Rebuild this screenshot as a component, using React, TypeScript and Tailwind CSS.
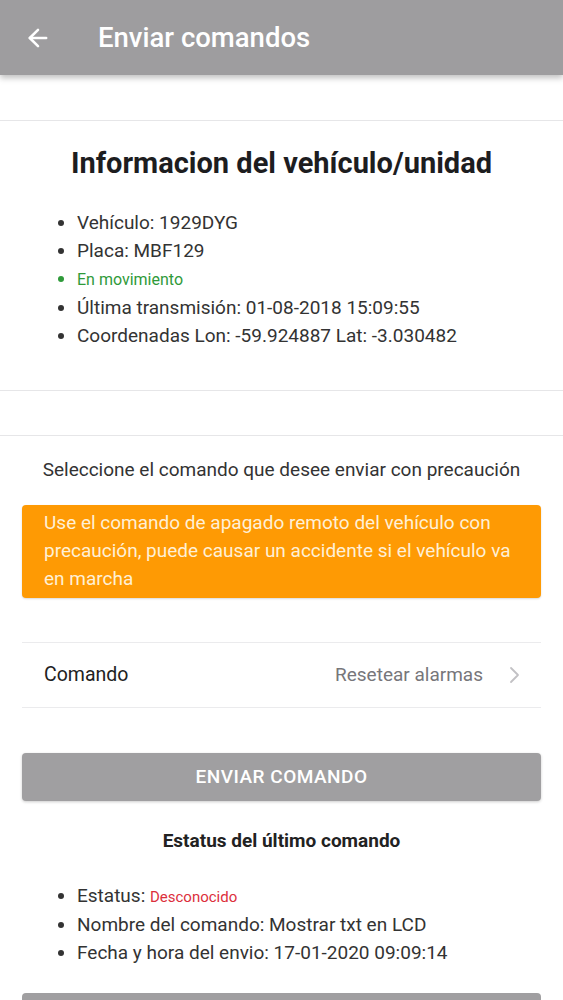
import React from 'react';
import { ArrowLeft } from 'lucide-react';

const VEHICLE = [
  { label: 'Vehículo: 1929DYG' },
  { label: 'Placa: MBF129' },
  { label: 'En movimiento', status: true },
  { label: 'Última transmisión: 01-08-2018 15:09:55' },
  { label: 'Coordenadas Lon: -59.924887 Lat: -3.030482' },
];

export default function App() {
  return (
    <div className="min-h-screen bg-white font-['Roboto',sans-serif] text-[#222]">
      {/* Toolbar */}
      <div className="h-[75px] bg-[#9e9d9f] flex items-center shadow-[0_3px_6px_rgba(0,0,0,0.25)] relative z-10">
        <ArrowLeft className="w-[28px] h-[28px] text-white ml-[24px]" strokeWidth={2.2} />
        <h1 className="ml-[46px] text-[27.5px] text-white font-medium">Enviar comandos</h1>
      </div>

      <div className="h-[45px]" />

      {/* Vehicle info */}
      <section className="border-t border-b border-[#e6e6e8] pt-[24px] pb-[40px]">
        <h2 className="text-center text-[29px] font-bold leading-[36px] text-[#1d1d1f]">
          Informacion del vehículo/unidad
        </h2>
        <ul className="list-disc pl-[77px] mt-[28px] text-[19px] leading-[28px] text-[#333]">
          {VEHICLE.map((v) => (
            <li key={v.label} className={v.status ? 'text-[#2f9a3a]' : ''}>
              {v.status ? <span className="text-[16px]">{v.label}</span> : v.label}
            </li>
          ))}
        </ul>
      </section>

      <div className="h-[45px] border-b border-[#e6e6e8]" />

      {/* Command selection */}
      <section className="px-[22px] pt-[22px]">
        <p className="text-center text-[19px] text-[#333] leading-[24px]">
          Seleccione el comando que desee enviar con precaución
        </p>
        <div className="mt-[23px] bg-[#fe9a04] rounded-[4px] px-[22px] pt-[4px] pb-[5px] text-[19px] leading-[28px] text-[#fff0d6] shadow-[0_1px_2px_rgba(0,0,0,0.15)]">
          Use el comando de apagado remoto del vehículo con precaución, puede causar un accidente si el vehículo va en marcha
        </div>

        <div className="mt-[44px] border-t border-b border-[#ebebed] h-[66px] flex items-center pl-[22px] pr-[21px]">
          <span className="text-[19.5px] text-[#222]">Comando</span>
          <span className="ml-auto text-[19px] text-[#77767a]">Resetear alarmas</span>
          <svg className="ml-[26px]" width="11" height="18" viewBox="0 0 11 18" fill="none">
            <polyline points="2,2 9,9 2,16" stroke="#c2c1c4" strokeWidth="1.8" strokeLinecap="round" strokeLinejoin="round" />
          </svg>
        </div>

        <button className="mt-[45px] w-full h-[48px] bg-[#a09fa1] rounded-[4px] text-white text-[19px] font-medium tracking-[0.5px] shadow-[0_1px_3px_rgba(0,0,0,0.2)]">
          ENVIAR COMANDO
        </button>

        <h3 className="mt-[28px] text-center text-[19px] font-bold text-[#222] leading-[24px]">
          Estatus del último comando
        </h3>
        <ul className="list-disc pl-[55px] mt-[29px] text-[19px] leading-[28px] text-[#333]">
          <li>
            Estatus: <span className="text-[15px] text-[#dc2f3c]">Desconocido</span>
          </li>
          <li>Nombre del comando: Mostrar txt en LCD</li>
          <li>Fecha y hora del envio: 17-01-2020 09:09:14</li>
        </ul>

        <div className="mt-[26px] w-full h-[48px] bg-[#a09fa1] rounded-[4px]" />
      </section>
    </div>
  );
}
